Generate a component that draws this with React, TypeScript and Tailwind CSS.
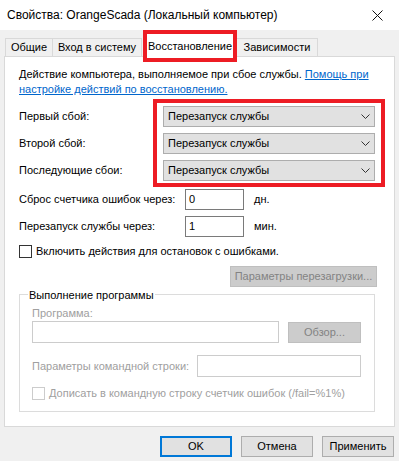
const font = "font-['Liberation_Sans',Arial,sans-serif]";

function Dropdown() {
    return (
        <div className="h-[21px] w-[212px] flex items-center justify-between bg-[#e1e1e1] border border-[#adadad] pl-[4px] pr-[4px] text-black">
            <span>Перезапуск службы</span>
            <svg width="9" height="5" viewBox="0 0 9 5">
                <path d="M0.5 0.5 L4.5 4.5 L8.5 0.5" fill="none" stroke="#333" strokeWidth="1" />
            </svg>
        </div>
    );
}

export default function App() {
    return (
        <div className={`${font} w-[399px] h-[461px] bg-[#f0f0f0] text-[11px] text-black overflow-hidden whitespace-nowrap`}>
            {/* Title bar */}
            <div className="h-[30px] bg-white flex items-center justify-between pl-[7px] pr-[16px] text-[12px]">
                <span>Свойства: OrangeScada (Локальный компьютер)</span>
                <svg width="11" height="11" viewBox="0 0 11 11" className="mt-[1px]">
                    <path d="M0.5 0.5 L10.5 10.5 M10.5 0.5 L0.5 10.5" stroke="#111" strokeWidth="1" />
                </svg>
            </div>

            {/* Tabs */}
            <div className="h-[26px] flex items-start pl-[5px] relative z-10">
                <div className="mt-[8px] h-[18px] w-[48px] flex items-center justify-center border border-b-0 border-[#d9d9d9] bg-[#f0f0f0]">Общие</div>
                <div className="mt-[8px] h-[18px] w-[89px] flex items-center justify-center border border-l-0 border-b-0 border-[#d9d9d9] bg-[#f0f0f0]">Вход в систему</div>
                <div className="ml-[1px] h-[32px] w-[94px] border-[4px] border-[#ed1c24] bg-white flex items-start justify-center pt-[4px]">Восстановление</div>
                <div className="mt-[8px] h-[18px] w-[81px] flex items-center justify-center border border-l-0 border-b-0 border-[#d9d9d9] bg-[#f0f0f0]">Зависимости</div>
            </div>

            {/* Panel */}
            <div className="mx-[4px] h-[371px] bg-white border border-[#d9d9d9] pl-[14px] pt-[10px] flex flex-col">
                <div className="leading-[15px]">
                    <div>
                        Действие компьютера, выполняемое при сбое службы.{" "}
                        <span className="text-[#0066cc] underline">Помощь при</span>
                    </div>
                    <div className="text-[#0066cc] underline">настройке действий по восстановлению.</div>
                </div>

                <div className="mt-[2px] flex">
                    <div className="w-[134px] flex flex-col pt-[7px] gap-[6px]">
                        <div className="h-[21px] flex items-center">Первый сбой:</div>
                        <div className="h-[21px] flex items-center">Второй сбой:</div>
                        <div className="h-[21px] flex items-center">Последующие сбои:</div>
                    </div>
                    <div className="w-[232px] h-[88px] border-[4px] border-[#ed1c24] pt-[3px] pl-[6px] flex flex-col gap-[6px]">
                        <Dropdown />
                        <Dropdown />
                        <Dropdown />
                    </div>
                </div>

                <div className="mt-[2px] flex items-center h-[21px]">
                    <span className="w-[166px] shrink-0">Сброс счетчика ошибок через:</span>
                    <div className="w-[59px] h-[21px] border border-[#7a7a7a] flex items-center pl-[3px]">0</div>
                    <span className="ml-[10px]">дн.</span>
                </div>
                <div className="mt-[6px] flex items-center h-[21px]">
                    <span className="w-[166px] shrink-0">Перезапуск службы через:</span>
                    <div className="w-[59px] h-[21px] border border-[#7a7a7a] flex items-center pl-[3px]">1</div>
                    <span className="ml-[10px]">мин.</span>
                </div>

                <div className="mt-[7px] flex items-center gap-[4px] h-[14px]">
                    <div className="w-[13px] h-[13px] border border-[#333]" />
                    <span>Включить действия для остановок с ошибками.</span>
                </div>

                <div className="mt-[8px] flex justify-end pr-[17px]">
                    <div className="w-[147px] h-[21px] bg-[#cccccc] border border-[#bfbfbf] text-[#838383] flex items-center justify-center">Параметры перезагрузки...</div>
                </div>

                {/* Group box */}
                <div className="mt-[7px] w-[356px] h-[118px] border border-[#dcdcdc] relative pl-[12px] pt-[11px] flex flex-col">
                    <span className="absolute -top-[8px] left-[8px] bg-white px-[1px]">Выполнение программы</span>
                    <span className="text-[#a0a0a0] leading-[14px]">Программа:</span>
                    <div className="mt-[1px] flex items-center gap-[9px]">
                        <div className="w-[247px] h-[22px] border border-[#cccccc]" />
                        <div className="w-[73px] h-[21px] bg-[#cccccc] border border-[#bfbfbf] text-[#838383] flex items-center justify-center">Обзор...</div>
                    </div>
                    <div className="mt-[12px] flex items-center">
                        <span className="w-[165px] shrink-0 text-[#a0a0a0]">Параметры командной строки:</span>
                        <div className="w-[164px] h-[22px] border border-[#cccccc]" />
                    </div>
                    <div className="mt-[9px] flex items-center gap-[4px] h-[14px]">
                        <div className="w-[13px] h-[13px] border border-[#cccccc]" />
                        <span className="text-[#a0a0a0]">Дописать в командную строку счетчик ошибок (/fail=%1%)</span>
                    </div>
                </div>
            </div>

            {/* Buttons */}
            <div className="mt-[9px] flex justify-end gap-[9px] pr-[5px]">
                <div className="w-[72px] h-[21px] border-2 border-[#0078d7] bg-[#e1e1e1] flex items-center justify-center">OK</div>
                <div className="w-[72px] h-[21px] border border-[#adadad] bg-[#e1e1e1] flex items-center justify-center">Отмена</div>
                <div className="w-[72px] h-[21px] border border-[#adadad] bg-[#e1e1e1] flex items-center justify-center">Применить</div>
            </div>
        </div>
    );
}
